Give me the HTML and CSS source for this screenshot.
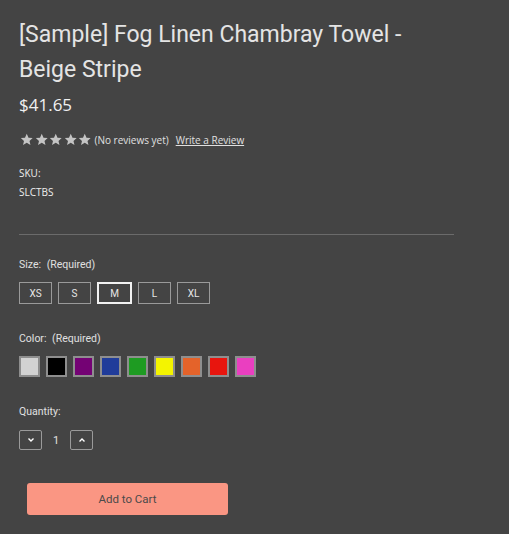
FILE: index.html
```html
<!DOCTYPE html>
<html>
<head>
<meta charset="utf-8">
<link rel="stylesheet" href="styles.css">
</head>
<body>
<main class="product">
  <h1 class="title">[Sample] Fog Linen Chambray Towel - Beige Stripe</h1>
  <div class="price">$41.65</div>
  <div class="rating">
    <span class="stars">
      <svg viewBox="0 0 24 24"><path d="M12 1.5l3.1 7 7.4.6-5.6 4.9 1.7 7.3L12 17.4l-6.6 3.9 1.7-7.3L1.5 9.1l7.4-.6z"/></svg>
      <svg viewBox="0 0 24 24"><path d="M12 1.5l3.1 7 7.4.6-5.6 4.9 1.7 7.3L12 17.4l-6.6 3.9 1.7-7.3L1.5 9.1l7.4-.6z"/></svg>
      <svg viewBox="0 0 24 24"><path d="M12 1.5l3.1 7 7.4.6-5.6 4.9 1.7 7.3L12 17.4l-6.6 3.9 1.7-7.3L1.5 9.1l7.4-.6z"/></svg>
      <svg viewBox="0 0 24 24"><path d="M12 1.5l3.1 7 7.4.6-5.6 4.9 1.7 7.3L12 17.4l-6.6 3.9 1.7-7.3L1.5 9.1l7.4-.6z"/></svg>
      <svg viewBox="0 0 24 24"><path d="M12 1.5l3.1 7 7.4.6-5.6 4.9 1.7 7.3L12 17.4l-6.6 3.9 1.7-7.3L1.5 9.1l7.4-.6z"/></svg>
    </span>
    <span class="no-reviews">(No reviews yet)</span>
    <a class="write-review" href="#">Write a Review</a>
  </div>
  <dl class="sku">
    <dt>SKU:</dt>
    <dd>SLCTBS</dd>
  </dl>
  <hr class="divider">
  <div class="field field-size">
    <div class="label">Size: <span class="req">(Required)</span></div>
    <div class="sizes">
      <span class="size">XS</span>
      <span class="size">S</span>
      <span class="size selected">M</span>
      <span class="size">L</span>
      <span class="size">XL</span>
    </div>
  </div>
  <div class="field">
    <div class="label">Color: <span class="req">(Required)</span></div>
    <div class="swatches">
      <span class="swatch c-silver"></span>
      <span class="swatch c-black"></span>
      <span class="swatch c-purple"></span>
      <span class="swatch c-blue"></span>
      <span class="swatch c-green"></span>
      <span class="swatch c-yellow"></span>
      <span class="swatch c-orange"></span>
      <span class="swatch c-red"></span>
      <span class="swatch c-pink"></span>
    </div>
  </div>
  <div class="field">
    <div class="label">Quantity:</div>
    <div class="qty">
      <span class="qty-btn"><svg viewBox="0 0 10 10"><path d="M2.5 3.5L5 6l2.5-2.5"/></svg></span>
      <span class="qty-val">1</span>
      <span class="qty-btn"><svg viewBox="0 0 10 10"><path d="M2.5 6.5L5 4l2.5 2.5"/></svg></span>
    </div>
  </div>
  <div class="cart-wrap">
    <button class="add-cart">Add to Cart</button>
  </div>
</main>
</body>
</html>
```
FILE: styles.css
```css
html, body {
  margin: 0;
  padding: 0;
  background: #444444;
}
body {
  font-family: Roboto, "Liberation Sans", sans-serif;
  color: #e6e6e6;
}
.product {
  padding: 17px 55px 0 19px;
}
.title {
  margin: 0;
  font-size: 23px;
  font-weight: 400;
  line-height: 35px;
  color: #e4e4e4;
}
.price {
  margin-top: 6px;
  font-family: "Open Sans", "Noto Sans", sans-serif;
  font-size: 17px;
  line-height: 24px;
  color: #f0f0f0;
}
.rating {
  margin-top: 15px;
  display: flex;
  align-items: center;
  height: 16px;
  font-family: "Open Sans", sans-serif;
  font-size: 10px;
}
.stars {
  display: flex;
  gap: 1px;
  margin-left: 1px;
}
.stars svg {
  width: 13.5px;
  height: 13.5px;
  fill: #c4c4c4;
}
.no-reviews {
  margin-left: 3px;
  color: #e0e0e0;
}
.write-review {
  margin-left: 7px;
  color: #e0e0e0;
  text-decoration: underline;
}
.sku {
  margin: 16px 0 0;
  font-family: "Open Sans", sans-serif;
  font-size: 10px;
  line-height: 19px;
  color: #eeeeee;
}
.sku dt, .sku dd {
  margin: 0;
}
.divider {
  margin: 32px 0 0;
  border: 0;
  border-top: 1px solid #6b6b6b;
  height: 0;
  width: 435px;
}
.field {
  margin-top: 27px;
}
.field.field-size {
  margin-top: 22px;
}
.label {
  font-size: 10.5px;
  line-height: 16px;
  color: #e0e0e0;
}
.req {
  margin-left: 3px;
}
.sizes {
  margin-top: 9px;
  display: flex;
  gap: 6px;
}
.size {
  box-sizing: border-box;
  width: 33px;
  height: 22px;
  border: 1px solid #9a9a9a;
  display: flex;
  align-items: center;
  justify-content: center;
  font-size: 10px;
  color: #e6e6e6;
}
.size.selected {
  border: 2px solid #f2f2f2;
  width: 35px;
}
.swatches {
  margin-top: 9px;
  display: flex;
  gap: 6px;
}
.swatch {
  box-sizing: border-box;
  width: 21px;
  height: 21px;
  border: 2px solid #8e8e8e;
  display: block;
}
.c-silver { background: #d2d2d2; }
.c-black { background: #000000; }
.c-purple { background: #740274; }
.c-blue { background: #203c9a; }
.c-green { background: #1e9b22; }
.c-yellow { background: #f4f400; }
.c-orange { background: #e4632a; }
.c-red { background: #e8150e; }
.c-pink { background: #ea3fc0; }
.qty {
  margin-top: 10px;
  display: flex;
  align-items: center;
}
.qty-btn {
  box-sizing: border-box;
  width: 23px;
  height: 20px;
  border: 1px solid #9a9a9a;
  border-radius: 2px;
  display: flex;
  align-items: center;
  justify-content: center;
}
.qty-btn svg {
  width: 10px;
  height: 10px;
  fill: none;
  stroke: #ffffff;
  stroke-width: 1.4;
}
.qty-val {
  width: 28px;
  text-align: center;
  font-size: 11px;
  color: #e0e0e0;
}
.cart-wrap {
  margin-top: 33px;
  padding-left: 8px;
}
.add-cart {
  width: 201px;
  height: 32px;
  border: 0;
  border-radius: 3px;
  background: #fa9683;
  color: #4a4a4a;
  font-family: Roboto, "Liberation Sans", sans-serif;
  font-size: 11.5px;
}
```
